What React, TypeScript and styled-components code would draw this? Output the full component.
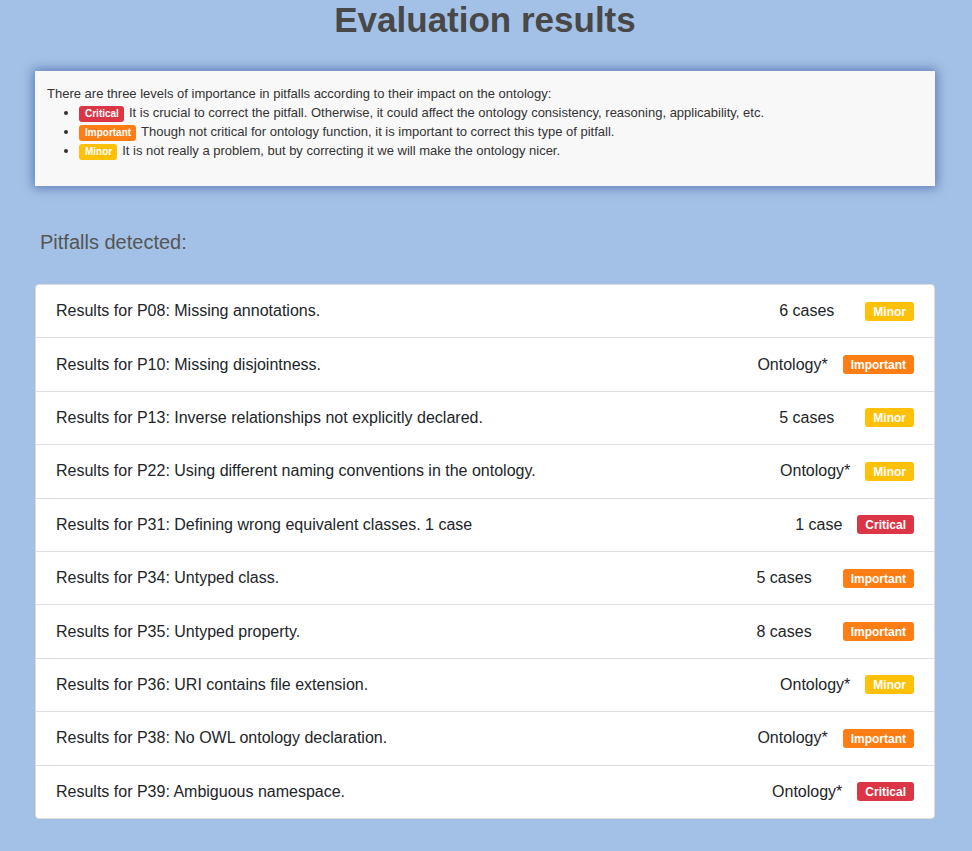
import React from "react";
import styled, { createGlobalStyle } from "styled-components";

const Global = createGlobalStyle`
  html, body { margin: 0; padding: 0; }
  body {
    background: #a3c1e6;
    font-family: "Liberation Sans", Arial, sans-serif;
    color: #212529;
  }
`;

const Page = styled.div`
  width: 972px;
  min-height: 851px;
  box-sizing: border-box;
  padding: 0 37px 0 35px;
  display: flex;
  flex-direction: column;
`;

const Title = styled.h1`
  margin: 0 0 7px 0;
  line-height: 39px;
  text-align: center;
  font-size: 35px;
  font-weight: 700;
  color: #484848;
`;

const InfoBox = styled.div`
  margin-top: 25px;
  background: #f8f8f8;
  box-shadow: 0 0 10px 2px rgba(40, 70, 140, 0.55);
  padding: 13px 12px 26px 12px;
  font-size: 13px;
  line-height: 19px;
  color: #333;
`;

const LevelList = styled.ul`
  margin: 0;
  padding-left: 32px;
`;

const LevelItem = styled.li`
  line-height: 19px;
`;

type Level = "Critical" | "Important" | "Minor";

const levelColor: Record<Level, string> = {
  Critical: "#dc3545",
  Important: "#fd7e14",
  Minor: "#ffc107",
};

const SmallBadge = styled.span<{ $level: Level }>`
  display: inline-block;
  background: ${(p) => levelColor[p.$level]};
  color: #fff;
  font-size: 10px;
  font-weight: 700;
  line-height: 10px;
  padding: 3px 5px 3px 6px;
  border-radius: 3px;
  vertical-align: baseline;
  margin-right: 5px;
`;

const Subtitle = styled.h3`
  margin: 44px 0 0 5px;
  font-size: 20px;
  font-weight: 400;
  line-height: 24px;
  color: #555;
`;

const ListGroup = styled.div`
  margin-top: 30px;
  background: #fff;
  border: 1px solid #dcdcdc;
  border-radius: 4px;
  display: flex;
  flex-direction: column;
`;

const Row = styled.div`
  display: flex;
  align-items: center;
  height: 52.4px;
  padding: 0 20px;
  font-size: 16px;
  color: #212529;
  & + & {
    border-top: 1px solid #dedede;
  }
`;

const RowLabel = styled.span`
  flex: 1;
`;

const Cases = styled.span<{ $gap: number }>`
  margin-right: ${(p) => p.$gap}px;
`;

const Badge = styled.span<{ $level: Level }>`
  display: inline-block;
  background: ${(p) => levelColor[p.$level]};
  color: #fff;
  font-size: 12px;
  font-weight: 700;
  line-height: 12px;
  padding: 4px 8px 3px;
  border-radius: 3px;
`;

const rows: { label: string; cases: string; level: Level }[] = [
  { label: "Results for P08: Missing annotations.", cases: "6 cases", level: "Minor" },
  { label: "Results for P10: Missing disjointness.", cases: "Ontology*", level: "Important" },
  { label: "Results for P13: Inverse relationships not explicitly declared.", cases: "5 cases", level: "Minor" },
  { label: "Results for P22: Using different naming conventions in the ontology.", cases: "Ontology*", level: "Minor" },
  { label: "Results for P31: Defining wrong equivalent classes. 1 case", cases: "1 case", level: "Critical" },
  { label: "Results for P34: Untyped class.", cases: "5 cases", level: "Important" },
  { label: "Results for P35: Untyped property.", cases: "8 cases", level: "Important" },
  { label: "Results for P36: URI contains file extension.", cases: "Ontology*", level: "Minor" },
  { label: "Results for P38: No OWL ontology declaration.", cases: "Ontology*", level: "Important" },
  { label: "Results for P39: Ambiguous namespace.", cases: "Ontology*", level: "Critical" },
];

export default function App() {
  return (
    <>
      <Global />
      <Page>
        <Title>Evaluation results</Title>
        <InfoBox>
          There are three levels of importance in pitfalls according to their impact on the ontology:
          <LevelList>
            <LevelItem>
              <SmallBadge $level="Critical">Critical</SmallBadge>It is crucial to correct the pitfall. Otherwise, it could affect the ontology consistency, reasoning, applicability, etc.
            </LevelItem>
            <LevelItem>
              <SmallBadge $level="Important">Important</SmallBadge>Though not critical for ontology function, it is important to correct this type of pitfall.
            </LevelItem>
            <LevelItem>
              <SmallBadge $level="Minor">Minor</SmallBadge>It is not really a problem, but by correcting it we will make the ontology nicer.
            </LevelItem>
          </LevelList>
        </InfoBox>
        <Subtitle>Pitfalls detected:</Subtitle>
        <ListGroup>
          {rows.map((r) => (
            <Row key={r.label}>
              <RowLabel>{r.label}</RowLabel>
              <Cases $gap={r.cases.endsWith("cases") ? 31 : 15}>{r.cases}</Cases>
              <Badge $level={r.level}>{r.level}</Badge>
            </Row>
          ))}
        </ListGroup>
      </Page>
    </>
  );
}
